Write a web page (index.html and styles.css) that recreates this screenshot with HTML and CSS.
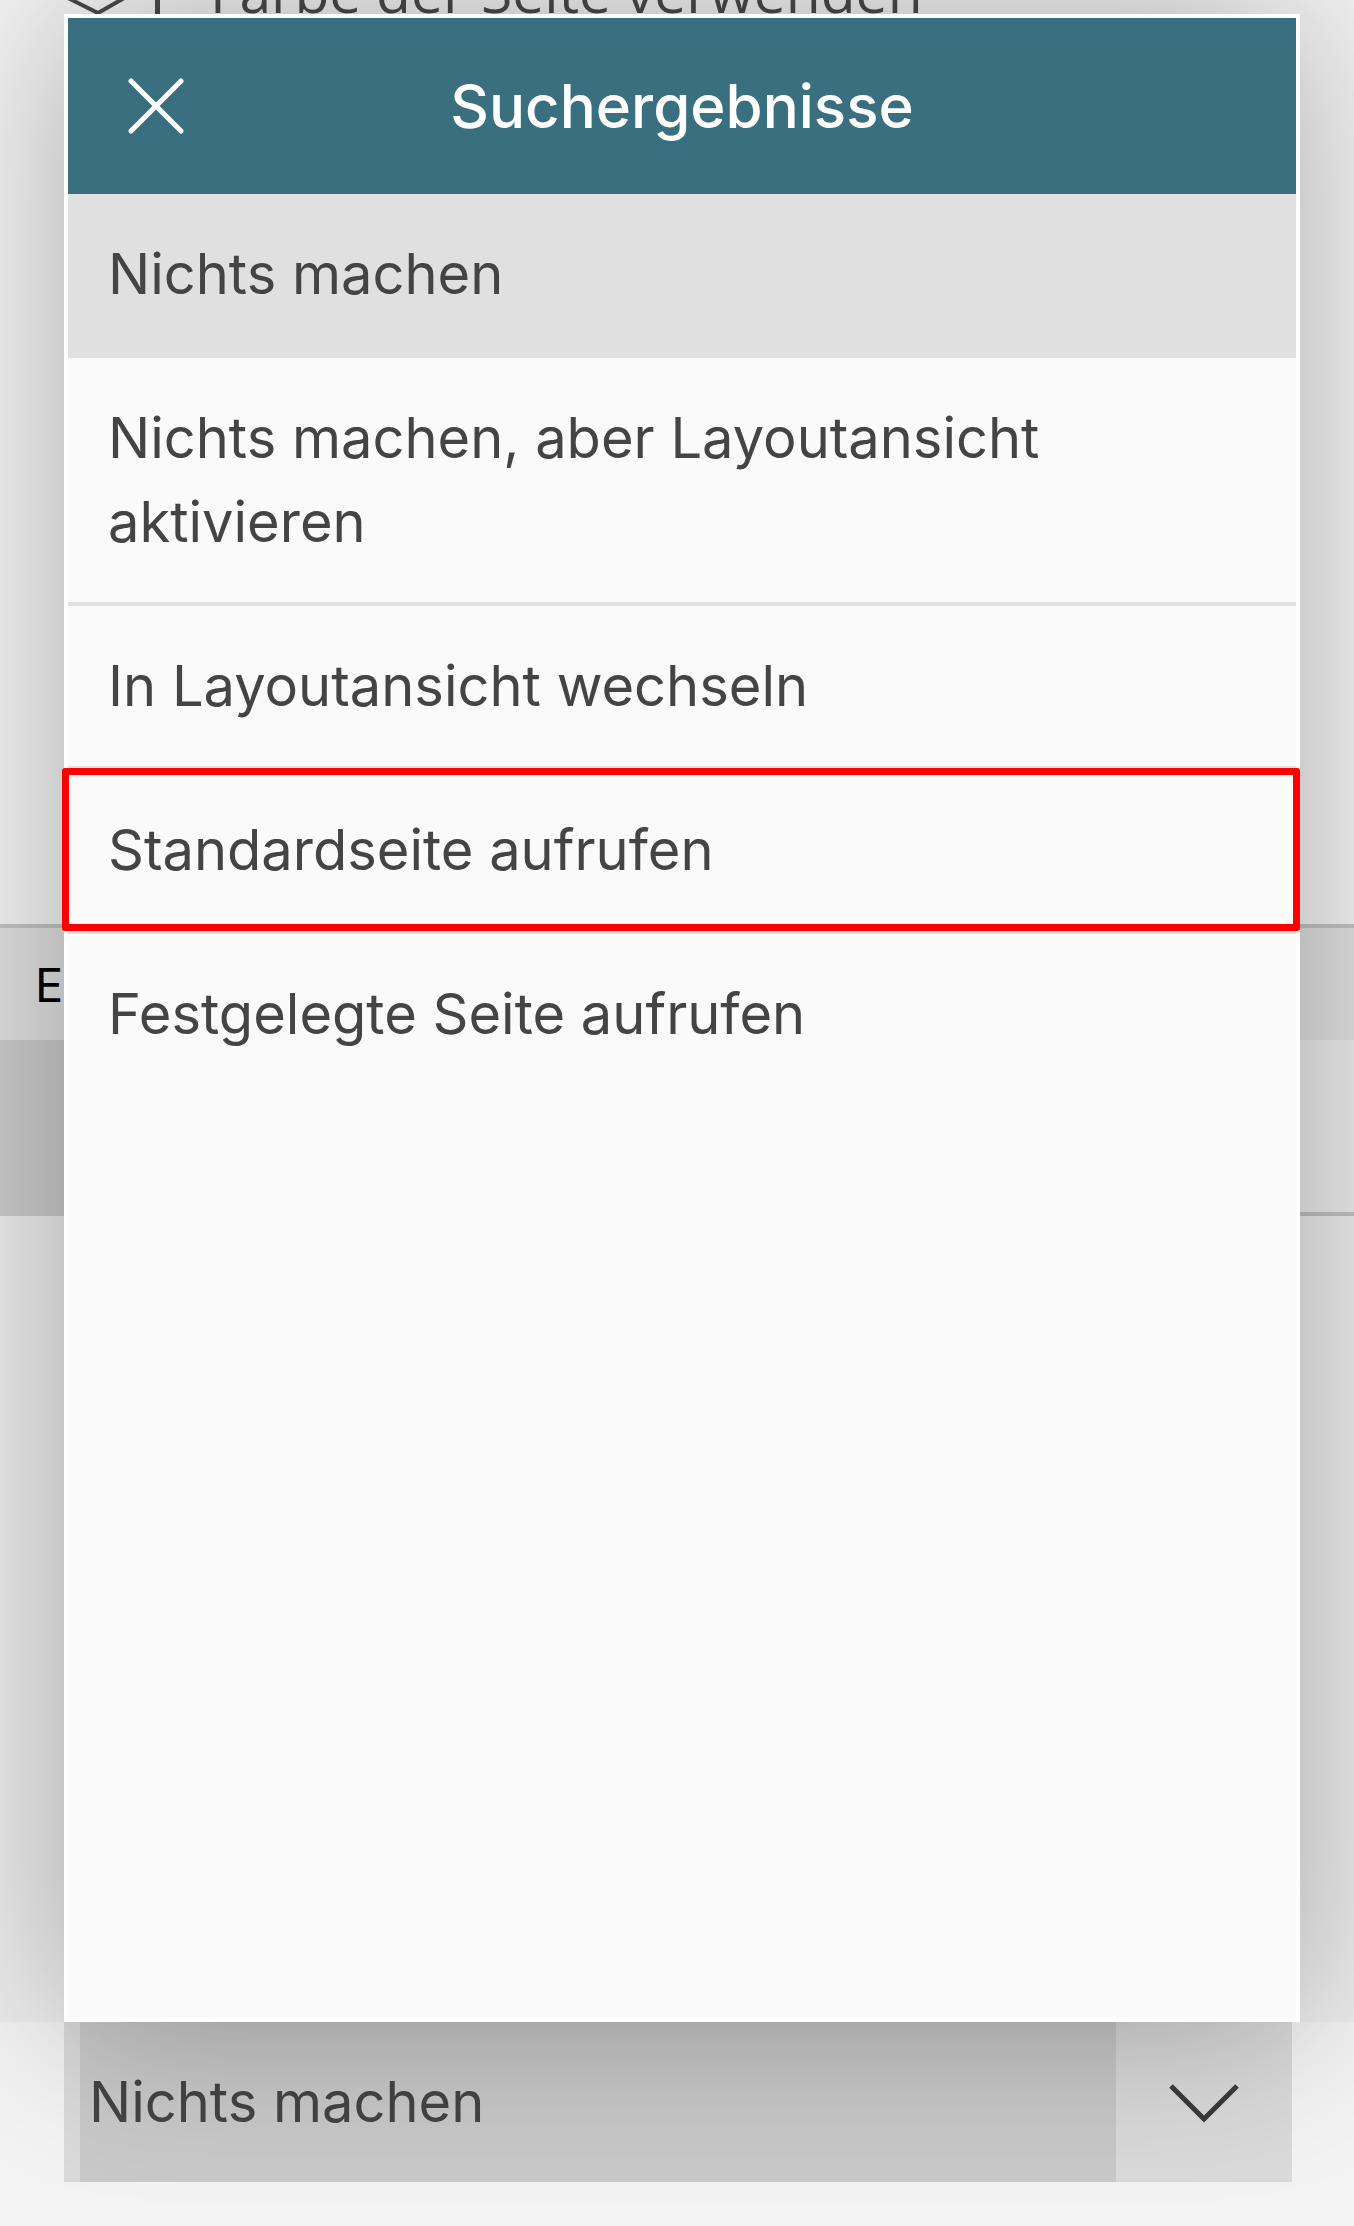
FILE: index.html
```html
<!DOCTYPE html>
<html lang="de">
<head>
<meta charset="utf-8">
<title>Suchergebnisse</title>
<link rel="stylesheet" href="styles.css">
</head>
<body>
<div class="page">
  <div class="backdrop">
    <div class="bg-top">
      <div class="check-row">
        <svg class="check-ico" width="66" height="44" viewBox="0 0 66 44" aria-hidden="true">
          <polyline points="2,27 34,43 62,27" fill="none" stroke="#4a4a4a" stroke-width="4"/>
        </svg>
        <span class="check-sep"></span>
        <span class="check-label">Farbe der Seite verwenden</span>
      </div>
    </div>
    <div class="bg-section"><span class="bg-section-title">Ei</span></div>
    <div class="bg-field">
      <div class="bg-field-main"></div>
      <div class="bg-field-side"></div>
    </div>
    <div class="bg-rest"></div>
    <div class="select">
      <div class="select-edge"></div>
      <div class="select-value">Nichts machen</div>
      <div class="select-arrow">
        <svg width="72" height="40" viewBox="0 0 72 40" aria-hidden="true">
          <polyline points="3,3 36,36 69,3" fill="none" stroke="#3a3a3a" stroke-width="5"/>
        </svg>
      </div>
    </div>
  </div>

  <div class="sheet">
    <div class="sheet-header">
      <button class="sheet-close" aria-label="Schließen">
        <svg width="56" height="56" viewBox="0 0 56 56" aria-hidden="true">
          <line x1="3" y1="3" x2="53" y2="53" stroke="#fff" stroke-width="5" stroke-linecap="round"/>
          <line x1="53" y1="3" x2="3" y2="53" stroke="#fff" stroke-width="5" stroke-linecap="round"/>
        </svg>
      </button>
      <h1 class="sheet-title">Suchergebnisse</h1>
      <span></span>
    </div>
    <ul class="results">
      <li class="result result--active">Nichts machen</li>
      <li class="result">Nichts machen, aber Layoutansicht aktivieren</li>
      <li class="result">In Layoutansicht wechseln</li>
      <li class="result result--marked">Standardseite aufrufen</li>
      <li class="result result--last">Festgelegte Seite aufrufen</li>
    </ul>
  </div>
</div>
</body>
</html>
```

FILE: styles.css
```css
* { box-sizing: border-box; }

html, body {
  margin: 0;
  padding: 0;
  background: #f3f3f3;
}

body {
  font-family: Inter, "Noto Sans", "Liberation Sans", sans-serif;
  width: 1354px;
  height: 2226px;
  overflow: hidden;
}

.page {
  position: relative;
  width: 1354px;
  height: 2226px;
}

/* ---------- dimmed page behind the sheet ---------- */
.backdrop {
  display: flex;
  flex-direction: column;
}

.bg-top {
  height: 924px;
  background: #f3f3f3;
}

.check-row {
  height: 14px;
  overflow: hidden;
  display: flex;
  align-items: flex-start;
}

.check-ico {
  flex: none;
  margin-left: 64px;
  margin-top: -30px;
}

.check-sep {
  flex: none;
  width: 5px;
  height: 40px;
  margin-left: 25px;
  margin-top: -26px;
  background: #4a4a4a;
}

.check-label {
  flex: none;
  margin-left: 50px;
  margin-top: -37px;
  font-family: "Open Sans", "Noto Sans", sans-serif;
  font-size: 57px;
  line-height: 57px;
  color: #4a4a4a;
  white-space: nowrap;
}

.bg-section {
  height: 116px;
  border-top: 4px solid #c2c2c2;
  background: #e0e0e0;
  display: flex;
  align-items: center;
  padding-left: 35px;
}

.bg-section-title {
  width: 29px;
  overflow: hidden;
  font-size: 47px;
  color: #000;
  white-space: nowrap;
}

.bg-field {
  height: 176px;
  display: flex;
}

.bg-field-main {
  flex: 1;
  background: #cbcbcb;
}

.bg-field-side {
  width: 200px;
  background: #ebebeb;
  border-bottom: 4px solid #c0c0c0;
}

.bg-rest {
  height: 806px;
  background: #ececec;
}

.select {
  height: 160px;
  width: 1228px;
  margin-left: 64px;
  display: flex;
}

.select-edge {
  width: 16px;
  background: #dadada;
}

.select-value {
  flex: 1;
  background: #c9c9c9;
  display: flex;
  align-items: center;
  padding-left: 9px;
  font-size: 56px;
  color: #444;
}

.select-arrow {
  width: 176px;
  background: #dadada;
  display: flex;
  align-items: center;
  justify-content: center;
  padding-top: 2px;
}

/* ---------- search result sheet ---------- */
.sheet {
  position: absolute;
  left: 64px;
  top: 14px;
  width: 1236px;
  height: 2008px;
  border: 4px solid #fff;
  background: #fafafa;
  box-shadow: 0 0 160px rgba(0, 0, 0, 0.3);
  display: flex;
  flex-direction: column;
}

.sheet-header {
  height: 176px;
  flex: none;
  background: #3a6f80;
  display: grid;
  grid-template-columns: 1fr auto 1fr;
  align-items: center;
}

.sheet-close {
  justify-self: start;
  margin-left: 60px;
  width: 56px;
  height: 56px;
  padding: 0;
  border: 0;
  background: none;
  display: flex;
}

.sheet-title {
  margin: 0;
  font-size: 60px;
  font-weight: 500;
  color: #fff;
  white-space: nowrap;
}

.results {
  list-style: none;
  margin: 0;
  padding: 0;
}

.result {
  position: relative;
  padding: 38px 120px 38px 40px;
  font-size: 56px;
  line-height: 84px;
  color: #444;
  border-bottom: 4px solid #e0e0e0;
}

.result--active {
  background: #e0e0e0;
}

.result--last {
  border-bottom: 0;
}

.result--marked::after {
  content: "";
  position: absolute;
  left: -6px;
  right: -4px;
  top: -2px;
  bottom: -1px;
  border: 7px solid #ff0000;
  border-radius: 3px;
  pointer-events: none;
}
```
